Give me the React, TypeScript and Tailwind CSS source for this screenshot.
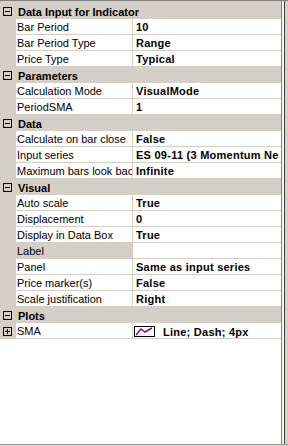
import React from "react";

type Row =
  | { kind: "cat"; label: string }
  | { kind: "prop"; name: string; value: string; selected?: boolean; plot?: boolean };

const rows: Row[] = [
  { kind: "cat", label: "Data Input for Indicator" },
  { kind: "prop", name: "Bar Period", value: "10" },
  { kind: "prop", name: "Bar Period Type", value: "Range" },
  { kind: "prop", name: "Price Type", value: "Typical" },
  { kind: "cat", label: "Parameters" },
  { kind: "prop", name: "Calculation Mode", value: "VisualMode" },
  { kind: "prop", name: "PeriodSMA", value: "1" },
  { kind: "cat", label: "Data" },
  { kind: "prop", name: "Calculate on bar close", value: "False" },
  { kind: "prop", name: "Input series", value: "ES 09-11 (3 Momentum Ne" },
  { kind: "prop", name: "Maximum bars look back", value: "Infinite" },
  { kind: "cat", label: "Visual" },
  { kind: "prop", name: "Auto scale", value: "True" },
  { kind: "prop", name: "Displacement", value: "0" },
  { kind: "prop", name: "Display in Data Box", value: "True" },
  { kind: "prop", name: "Label", value: "", selected: true },
  { kind: "prop", name: "Panel", value: "Same as input series" },
  { kind: "prop", name: "Price marker(s)", value: "False" },
  { kind: "prop", name: "Scale justification", value: "Right" },
  { kind: "cat", label: "Plots" },
  { kind: "prop", name: "SMA", value: "Line; Dash; 4px", plot: true },
];

function Box({ plus }: { plus?: boolean }) {
  return (
    <svg width="9" height="9" viewBox="0 0 9 9" className="block">
      <rect x="0.5" y="0.5" width="8" height="8" fill="none" stroke="#000" />
      <line x1="2" y1="4.5" x2="7" y2="4.5" stroke="#000" />
      {plus && <line x1="4.5" y1="2" x2="4.5" y2="7" stroke="#000" />}
    </svg>
  );
}

export default function App() {
  return (
    <div
      className="w-[288px] h-[446px] bg-white flex flex-col overflow-hidden text-black"
      style={{ fontFamily: '"Liberation Sans", Arial, sans-serif' }}
    >
      <div className="flex flex-1 min-h-0">
        <div className="w-[281px] flex flex-col border-t border-[#808080]">
          <div className="h-[2px] bg-[#d4d0c8]" />
          {rows.map((r, i) =>
            r.kind === "cat" ? (
              <div key={i} className="h-[16px] bg-[#d4d0c8] flex items-start">
                <div className="w-[16px] pl-[3px] pt-[4px] shrink-0">
                  <Box />
                </div>
                <div className="pl-[2px] text-[11px] font-bold leading-[18px] h-[16px] overflow-hidden whitespace-nowrap">
                  {r.label}
                </div>
              </div>
            ) : (
              <div key={i} className="h-[16px] flex">
                <div className="w-[16px] bg-[#d4d0c8] pl-[3px] pt-[4px] shrink-0">
                  {r.plot && <Box plus />}
                </div>
                <div
                  className={`w-[117px] h-[16px] shrink-0 border-b border-r border-[#d4d0c8] pl-[1px] text-[11px] leading-[17px] whitespace-nowrap overflow-hidden ${
                    r.selected ? "bg-[#d4d0c8]" : ""
                  }`}
                >
                  {r.name}
                </div>
                <div className="flex-1 min-w-0 h-[16px] border-b border-[#d4d0c8] flex items-start overflow-hidden">
                  {r.plot ? (
                    <div className="flex items-start pt-[3px]">
                      <svg width="21" height="11" viewBox="0 0 21 11" className="block ml-[1px]">
                        <rect x="0.5" y="0.5" width="20" height="10" fill="#fff" stroke="#000" />
                        <polyline
                          points="2,9 7,3 11,6 18,2"
                          fill="none"
                          stroke="#8000c0"
                          strokeWidth="1.5"
                        />
                      </svg>
                      <span className="ml-[8px] text-[11px] font-bold tracking-[0.25px] leading-[12px] whitespace-nowrap">
                        {r.value}
                      </span>
                    </div>
                  ) : (
                    <span className="pl-[3px] text-[11px] font-bold tracking-[0.25px] leading-[17px] whitespace-nowrap">
                      {r.value}
                    </span>
                  )}
                </div>
              </div>
            )
          )}
          <div className="flex-1" />
        </div>
        <div className="w-[7px] flex border-t border-[#808080]">
          <div className="w-[1px] bg-[#808080]" />
          <div className="w-[2px] bg-[#f4f4f0]" />
          <div className="w-[1px] bg-[#404040]" />
          <div className="w-[3px] bg-[#d4d0c8]" />
        </div>
      </div>
      <div className="h-[1px] bg-[#a0a0a0]" />
      <div className="h-[1px] bg-[#d4d0c8]" />
    </div>
  );
}
